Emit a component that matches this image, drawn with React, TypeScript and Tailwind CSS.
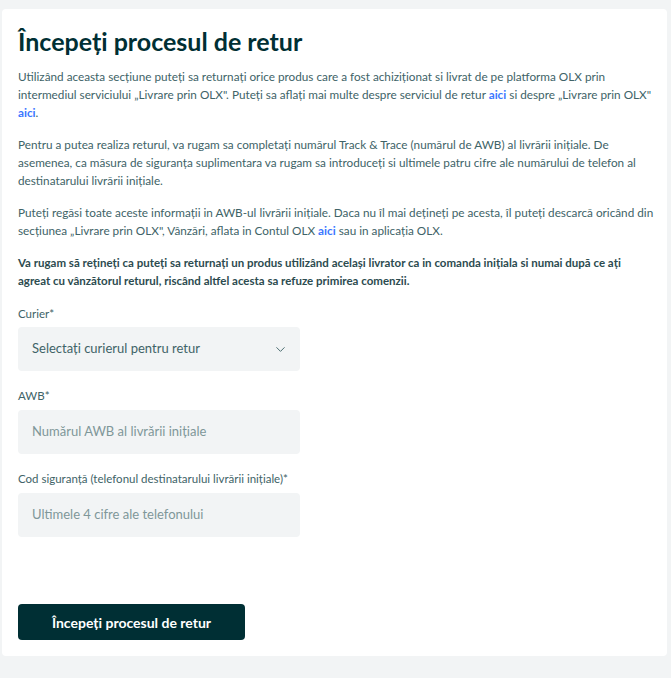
import React from 'react';
import { ChevronDown } from 'lucide-react';

const font = { fontFamily: 'Lato, "Open Sans", sans-serif' };

const Link: React.FC<{ children: React.ReactNode }> = ({ children }) => (
  <a href="#" className="font-bold text-[#3a77ff]">{children}</a>
);

export default function App() {
  return (
    <div className="min-h-[678px] bg-[#f2f4f5] pt-[9px] pl-[2px] pr-[4px] pb-[21px]" style={font}>
      <div className="rounded-[4px] bg-white px-[16px] pt-[16px] pb-[16px]">
        <h1 className="text-[25px] font-bold leading-[32px] text-[#002f34]">Începeți procesul de retur</h1>

        <div className="mt-[11px] space-y-[14px] whitespace-nowrap text-[11.75px] leading-[18px] text-[#406367]">
          <p>
            Utilizând aceasta secțiune puteți sa returnați orice produs care a fost achiziționat si livrat de pe platforma OLX prin
            <br />
            intermediul serviciului „Livrare prin OLX". Puteți sa aflați mai multe despre serviciul de retur <Link>aici</Link> si despre „Livrare prin OLX"
            <br />
            <Link>aici</Link>.
          </p>
          <p>
            Pentru a putea realiza returul, va rugam sa completați numărul Track &amp; Trace (numărul de AWB) al livrării inițiale. De
            <br />
            asemenea, ca măsura de siguranța suplimentara va rugam sa introduceți si ultimele patru cifre ale numărului de telefon al
            <br />
            destinatarului livrării inițiale.
          </p>
          <p>
            Puteți regăsi toate aceste informații in AWB-ul livrării inițiale. Daca nu îl mai dețineți pe acesta, îl puteți descarcă oricând din
            <br />
            secțiunea „Livrare prin OLX", Vânzări, aflata in Contul OLX <Link>aici</Link> sau in aplicația OLX.
          </p>
          <p className="text-[11.5px] font-bold text-[#2c4b4f]">
            Va rugam să rețineți ca puteți sa returnați un produs utilizând același livrator ca in comanda inițiala si numai după ce ați
            <br />
            agreat cu vânzătorul returul, riscând altfel acesta sa refuze primirea comenzii.
          </p>
        </div>

        <div className="mt-[15px] w-[282px] text-[#406367]">
          <label className="block text-[11.5px] leading-[18px]">Curier*</label>
          <div className="mt-[4px] flex h-[44px] items-center justify-between rounded-[4px] bg-[#f2f4f5] pl-[14px] pr-[12px]">
            <span className="text-[13px] text-[#406367]">Selectați curierul pentru retur</span>
            <ChevronDown size={15} strokeWidth={1.5} className="text-[#406367]" />
          </div>

          <label className="mt-[16px] block text-[11.5px] leading-[18px]">AWB*</label>
          <div className="mt-[5px] flex h-[44px] items-center rounded-[4px] bg-[#f2f4f5] px-[14px]">
            <span className="text-[13px] text-[#7f9799]">Numărul AWB al livrării inițiale</span>
          </div>

          <label className="mt-[16px] block whitespace-nowrap text-[11.5px] leading-[18px]">Cod siguranță (telefonul destinatarului livrării inițiale)*</label>
          <div className="mt-[5px] flex h-[44px] items-center rounded-[4px] bg-[#f2f4f5] px-[14px]">
            <span className="text-[13px] text-[#7f9799]">Ultimele 4 cifre ale telefonului</span>
          </div>
        </div>

        <button className="mt-[67px] flex h-[36px] w-[227px] items-center justify-center rounded-[4px] bg-[#002f34] text-[14px] font-bold text-white">
          Începeți procesul de retur
        </button>
      </div>
    </div>
  );
}
